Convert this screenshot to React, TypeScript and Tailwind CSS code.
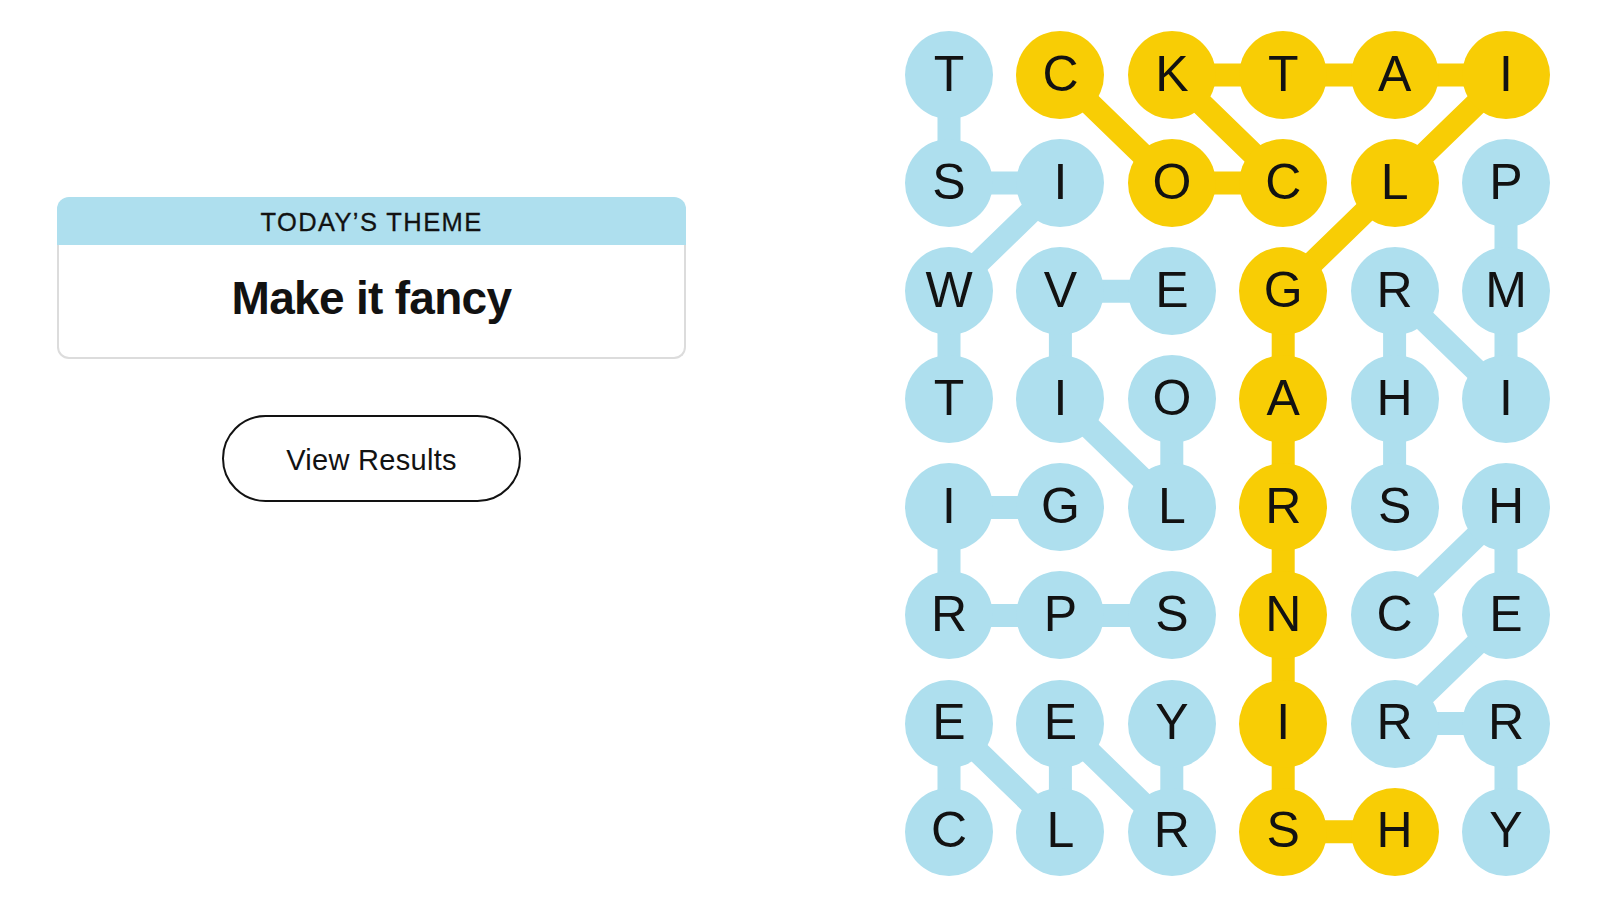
import React from 'react';

const BLUE = '#aedfee';
const YELLOW = '#f8cd05';

// pitch between circle centres on the board
const COL = 111.4;
const ROW = 108.1;
const R = 44;

const letters = [
  'TCKTAI',
  'SIOCLP',
  'WVEGRM',
  'TIOAHI',
  'IGLRSH',
  'RPSNCE',
  'EEYIRR',
  'CLRSHY',
];

type Cell = [number, number];

const spangram: Cell[] = [
  [0, 1], [1, 2], [1, 3], [0, 2], [0, 3], [0, 4], [0, 5], [1, 4],
  [2, 3], [3, 3], [4, 3], [5, 3], [6, 3], [7, 3], [7, 4],
];

const words: Cell[][] = [
  [[3, 0], [2, 0], [1, 1], [1, 0], [0, 0]], // twist
  [[3, 2], [4, 2], [3, 1], [2, 1], [2, 2]], // olive
  [[5, 2], [5, 1], [5, 0], [4, 0], [4, 1]], // sprig
  [[7, 0], [6, 0], [7, 1], [6, 1], [7, 2], [6, 2]], // celery
  [[4, 4], [3, 4], [2, 4], [3, 5], [2, 5], [1, 5]], // shrimp
  [[5, 4], [4, 5], [5, 5], [6, 4], [6, 5], [7, 5]], // cherry
];

const isYellow = (r: number, c: number) =>
  spangram.some(([a, b]) => a === r && b === c);

const toPoints = (path: Cell[]) =>
  path.map(([r, c]) => `${R + c * COL},${R + r * ROW}`).join(' ');

const Board = () => {
  return (
    <div className="relative">
      <svg
        className="absolute inset-0 w-full h-full"
        fill="none"
        strokeWidth={23}
        strokeLinejoin="round"
      >
        {words.map((w, i) => (
          <polyline key={i} points={toPoints(w)} stroke={BLUE} />
        ))}
        <polyline points={toPoints(spangram)} stroke={YELLOW} />
      </svg>

      <div className="relative grid grid-cols-[repeat(6,88px)] auto-rows-[88px] gap-x-[23.4px] gap-y-[20.1px]">
        {letters.map((row, r) =>
          row.split('').map((ch, c) => (
            <button
              key={`${r}-${c}`}
              className={`w-[88px] h-[88px] rounded-full flex items-center justify-center pb-[3px] text-[50px] leading-none text-[#121212] ${
                isYellow(r, c) ? 'bg-[#f8cd05]' : 'bg-[#aedfee]'
              }`}
            >
              {ch}
            </button>
          ))
        )}
      </div>
    </div>
  );
};

const App = () => {
  return (
    <div
      className="w-full min-h-screen bg-white flex justify-between"
      style={{ fontFamily: '"Liberation Sans", Arial, sans-serif' }}
    >
      {/* Left: theme card */}
      <div className="pl-[57px] pt-[197px] flex flex-col items-center">
        <div className="w-[629px]">
          <div className="h-[48px] bg-[#aedfee] rounded-t-xl flex items-center justify-center">
            <span className="text-[25.5px] tracking-[1.4px] text-[#121212] uppercase pt-[3px] [-webkit-text-stroke:0.3px_#121212]">
              Today’s Theme
            </span>
          </div>
          <div className="h-[114px] border-2 border-t-0 border-[#dcdcdc] rounded-b-xl flex items-center justify-center pb-[5px]">
            <h1 className="text-[46px] font-bold tracking-[-0.7px] text-[#121212]">
              Make it fancy
            </h1>
          </div>
        </div>

        <button className="mt-[56px] w-[299px] h-[87px] rounded-full border-2 border-[#121212] text-[29px] tracking-[0.3px] text-[#121212] bg-white pt-[4px]">
          View Results
        </button>
      </div>

      {/* Right: letter board */}
      <div className="pt-[31px] pr-[52px]">
        <Board />
      </div>
    </div>
  );
};

export default App;
